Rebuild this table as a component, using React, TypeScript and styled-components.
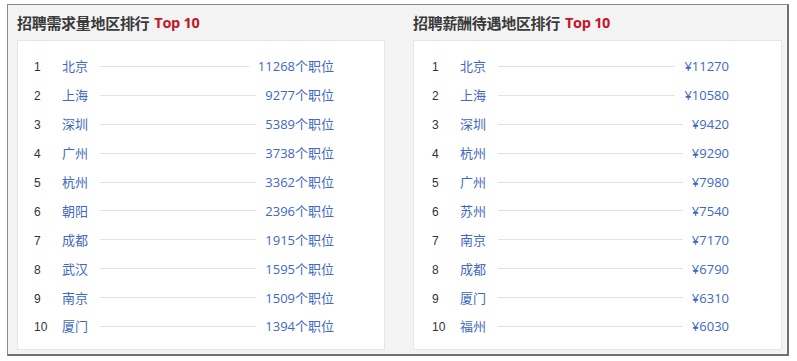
import React from 'react';
import styled, { createGlobalStyle } from 'styled-components';

const GlobalStyle = createGlobalStyle`
  html, body {
    margin: 0;
    padding: 0;
    background: #ffffff;
  }
  body {
    font-family: "Noto Sans CJK SC", "Liberation Sans", sans-serif;
  }
`;

const Page = styled.div`
  padding: 4px 0 0 7px;
`;

const Frame = styled.div`
  box-sizing: border-box;
  width: 782px;
  height: 352px;
  border-left: 1px solid #8a8a8a;
  border-top: 1px solid #8a8a8a;
  border-right: 2px solid #707070;
  border-bottom: 2px solid #707070;
  background: #f3f3f3;
  display: grid;
  grid-template-columns: 368px 369px;
  column-gap: 28px;
  padding-left: 9px;
`;

const Column = styled.section`
  display: flex;
  flex-direction: column;
`;

const Title = styled.h2`
  margin: 0;
  height: 35px;
  display: flex;
  align-items: center;
  font-size: 15px;
  font-weight: 700;
  color: #3a3a3a;
  letter-spacing: -0.3px;
  white-space: nowrap;
`;

const Top = styled.span`
  margin-left: 5px;
  color: #c3162b;
  font-family: "Open Sans", "Liberation Sans", sans-serif;
  font-size: 14.5px;
  font-weight: 700;
`;

const Panel = styled.div<{ $left: number }>`
  height: 310px;
  box-sizing: border-box;
  background: #ffffff;
  border: 1px solid #e6e6e6;
  padding: 11px 0 0 ${(p) => p.$left}px;
`;

const List = styled.ol<{ $width: number }>`
  list-style: none;
  margin: 0;
  padding: 0;
  width: ${(p) => p.$width}px;
`;

const Row = styled.li`
  height: 28.9px;
  display: flex;
  align-items: center;
  line-height: 16px;
`;

const Rank = styled.span`
  width: 28px;
  flex: none;
  font-family: "Liberation Sans", sans-serif;
  font-size: 12px;
  color: #333333;
  padding-top: 2px;
`;

const City = styled.span`
  width: 38px;
  flex: none;
  font-size: 13px;
  color: #3f68c2;
`;

const Leader = styled.span`
  flex: 1;
  height: 1px;
  background: #e2e2e2;
  margin-right: 9px;
`;

const Value = styled.span`
  flex: none;
  font-size: 13px;
  color: #3f68c2;
  font-family: "Open Sans", "Noto Sans CJK SC", sans-serif;
  text-align: right;
`;

type Item = { city: string; value: string };

const demand: Item[] = [
  { city: '北京', value: '11268个职位' },
  { city: '上海', value: '9277个职位' },
  { city: '深圳', value: '5389个职位' },
  { city: '广州', value: '3738个职位' },
  { city: '杭州', value: '3362个职位' },
  { city: '朝阳', value: '2396个职位' },
  { city: '成都', value: '1915个职位' },
  { city: '武汉', value: '1595个职位' },
  { city: '南京', value: '1509个职位' },
  { city: '厦门', value: '1394个职位' },
];

const salary: Item[] = [
  { city: '北京', value: '¥11270' },
  { city: '上海', value: '¥10580' },
  { city: '深圳', value: '¥9420' },
  { city: '杭州', value: '¥9290' },
  { city: '广州', value: '¥7980' },
  { city: '苏州', value: '¥7540' },
  { city: '南京', value: '¥7170' },
  { city: '成都', value: '¥6790' },
  { city: '厦门', value: '¥6310' },
  { city: '福州', value: '¥6030' },
];

const Ranking: React.FC<{ title: string; items: Item[]; left: number; width: number }> = ({
  title,
  items,
  left,
  width,
}) => (
  <Column>
    <Title>
      {title}
      <Top>Top 10</Top>
    </Title>
    <Panel $left={left}>
      <List $width={width}>
        {items.map((it, i) => (
          <Row key={it.city}>
            <Rank>{i + 1}</Rank>
            <City>{it.city}</City>
            <Leader />
            <Value>{it.value}</Value>
          </Row>
        ))}
      </List>
    </Panel>
  </Column>
);

const App: React.FC = () => (
  <>
    <GlobalStyle />
    <Page>
      <Frame>
        <Ranking title="招聘需求量地区排行" items={demand} left={16} width={300} />
        <Ranking title="招聘薪酬待遇地区排行" items={salary} left={18} width={297} />
      </Frame>
    </Page>
  </>
);

export default App;
